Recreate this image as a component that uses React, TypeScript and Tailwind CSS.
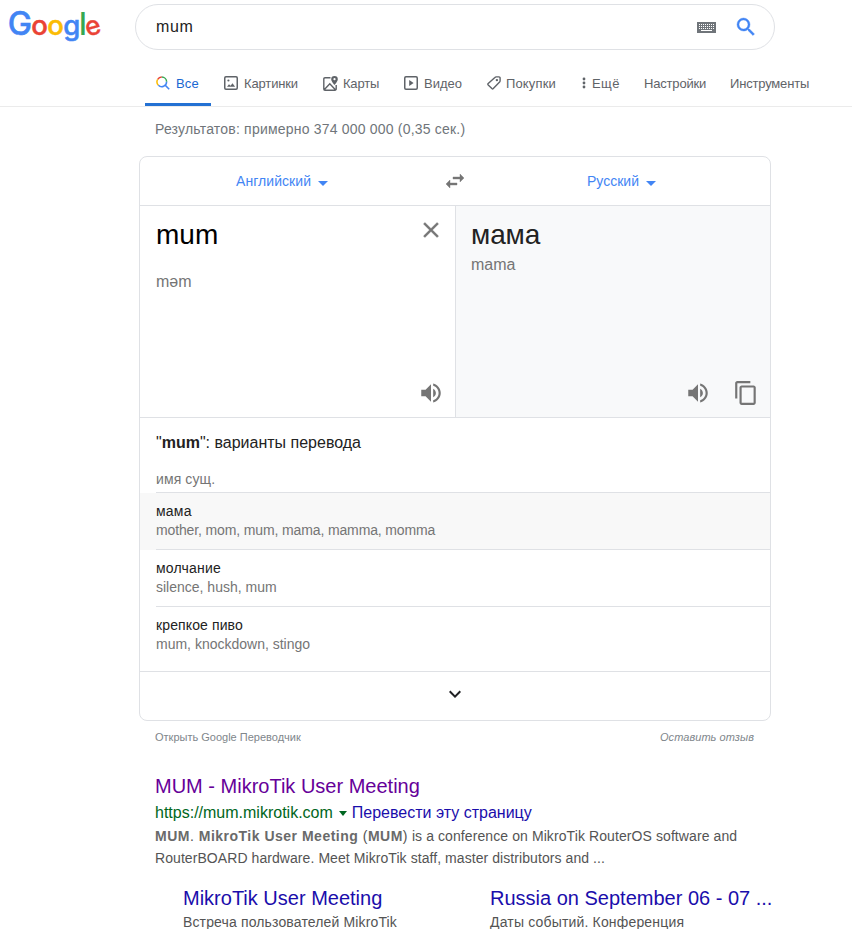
import type { ReactNode } from 'react';

interface IconProps {
  d: string;
  size: number;
  className?: string;
}

interface TabProps {
  label: string;
  icon?: ReactNode;
  className: string;
  labelClass?: string;
}

interface Variant {
  word: string;
  wordClass: string;
  back: string;
  backClass: string;
}

const SWAP = 'M6.99 11L3 15l3.99 4v-3H14v-2H6.99v-3zM21 9l-3.99-4v3H10v2h7.01v3L21 9z';
const CLOSE = 'M19 6.41L17.59 5 12 10.59 6.41 5 5 6.41 10.59 12 5 17.59 6.41 19 12 13.41 17.59 19 19 17.59 13.41 12z';
const SPEAKER = 'M3 9v6h4l5 5V4L7 9H3zm13.5 3c0-1.77-1.02-3.29-2.5-4.03v8.05c1.48-.73 2.5-2.25 2.5-4.02zM14 3.23v2.06c2.89.86 5 3.54 5 6.71s-2.11 5.85-5 6.71v2.06c4.01-.91 7-4.49 7-8.77s-2.99-7.86-7-8.77z';
const COPY = 'M16 1H4c-1.1 0-2 .9-2 2v14h2V3h12V1zm3 4H8c-1.1 0-2 .9-2 2v14c0 1.1.9 2 2 2h11c1.1 0 2-.9 2-2V7c0-1.1-.9-2-2-2zm0 16H8V7h11v14z';
const SEARCH = 'M15.5 14h-.79l-.28-.27A6.47 6.47 0 0 0 16 9.5 6.5 6.5 0 1 0 9.5 16c1.61 0 3.09-.59 4.23-1.57l.27.28v.79l5 4.99L20.49 19l-4.99-5zm-6 0C7.01 14 5 11.99 5 9.5S7.01 5 9.5 5 14 7.01 14 9.5 11.99 14 9.5 14z';
const EXPAND = 'M16.59 8.59L12 13.17 7.41 8.59 6 10l6 6 6-6z';

const variants: Variant[] = [
  { word: 'мама', wordClass: 'tracking-[0.2px]', back: 'mother, mom, mum, mama, mamma, momma', backClass: 'tracking-[-0.13px]' },
  { word: 'молчание', wordClass: 'tracking-[0.2px]', back: 'silence, hush, mum', backClass: '' },
  { word: 'крепкое пиво', wordClass: 'tracking-[0.12px]', back: 'mum, knockdown, stingo', backClass: '' },
];

function Icon({ d, size, className }: IconProps) {
  return (
    <svg width={size} height={size} viewBox="0 0 24 24" fill="currentColor" className={className}>
      <path d={d} />
    </svg>
  );
}

function Caret({ className, width = 10 }: { className: string; width?: number }) {
  return (
    <svg width={width} height="5" viewBox="0 0 10 5" preserveAspectRatio="none" fill="currentColor" className={`shrink-0 ${className}`}>
      <path d="M0 0h10L5 5z" />
    </svg>
  );
}

function Logo() {
  return (
    <svg width="135" height="46" viewBox="0 0 135 46" className="shrink-0 font-[Inter] font-medium">
      <g strokeWidth="0.5">
        <text x="7.7" y="31" fontSize="32.5" fill="#4285f4" stroke="#4285f4">G</text>
        <text x="31.3" y="31" fontSize="27.5" fill="#ea4335" stroke="#ea4335">o</text>
        <text x="47.3" y="31" fontSize="27.5" fill="#fbbc05" stroke="#fbbc05">o</text>
        <text x="63.3" y="31" fontSize="27.5" fill="#4285f4" stroke="#4285f4">g</text>
      </g>
      <text x="79" y="31" fontSize="31" fill="#34a853">l</text>
      <text x="85.2" y="31" fontSize="26.5" fill="#ea4335" stroke="#ea4335" strokeWidth="0.3" transform="rotate(-16 93 23.5)">e</text>
    </svg>
  );
}

function KeyboardIcon() {
  return (
    <svg width="19" height="11" viewBox="0 0 19 11">
      <rect width="19" height="11" fill="#70757a" />
      <g stroke="#fff" strokeWidth="1" strokeDasharray="1 1">
        <path d="M2 2.5h15M2 4.5h15M2 6.5h15" />
      </g>
      <path d="M4 8.5h11" stroke="#fff" />
    </svg>
  );
}

function AllIcon() {
  return (
    <svg width="14" height="14" viewBox="0 0 14 14" fill="none" strokeWidth="1.5">
      <path d="M1.7 3.4A4.8 4.8 0 0 1 5.8 1" stroke="#ea4335" />
      <path d="M5.8 1A4.8 4.8 0 0 1 10.6 5.8" stroke="#34a853" />
      <path d="M2.4 9.2A4.8 4.8 0 0 1 1.7 3.4" stroke="#fbbc05" />
      <path d="M10.6 5.8A4.8 4.8 0 0 1 2.4 9.2M9.1 9.1l4.1 4.1" stroke="#4285f4" />
    </svg>
  );
}

function PictureIcon() {
  return (
    <svg width="14" height="14" viewBox="0 0 14 14" fill="none">
      <rect x=".75" y=".75" width="12.5" height="12.5" rx="1.2" stroke="#5f6368" strokeWidth="1.5" />
      <path d="M3 10.8l2-2.5 1.5 1.5 2-2.6 2.6 3.6z" fill="#5f6368" />
      <circle cx="4.4" cy="4.5" r="1.1" fill="#5f6368" />
    </svg>
  );
}

function MapIcon() {
  return (
    <svg width="15" height="15" viewBox="0 0 15 15" fill="none">
      <path d="M7.5 1.75H2a1.2 1.2 0 0 0-1.2 1.2V13A1.2 1.2 0 0 0 2 14.2h10a1.2 1.2 0 0 0 1.2-1.2V9M1.2 13.8l5.6-6 5.6 6" stroke="#5f6368" strokeWidth="1.4" />
      <path d="M11.5 0a3.3 3.3 0 0 0-3.3 3.3c0 2.3 3.3 5.7 3.3 5.7s3.3-3.4 3.3-5.7A3.3 3.3 0 0 0 11.5 0zm0 4.3a1.1 1.1 0 1 1 0-2.2 1.1 1.1 0 0 1 0 2.2z" fill="#5f6368" />
    </svg>
  );
}

function VideoIcon() {
  return (
    <svg width="14" height="14" viewBox="0 0 14 14" fill="none">
      <rect x=".75" y=".75" width="12.5" height="12.5" rx="1.2" stroke="#5f6368" strokeWidth="1.5" />
      <path d="M5.2 4v6l4.4-3z" fill="#5f6368" />
    </svg>
  );
}

function TagIcon() {
  return (
    <svg width="14" height="14" viewBox="0 0 14 14" fill="none">
      <path d="M7.9 1.4C8.3 1 8.7.9 9.2.9H12a1.1 1.1 0 0 1 1.1 1.1v2.8c0 .5-.1.9-.5 1.3l-6.3 6.5a1 1 0 0 1-1.4 0L1.2 9a1 1 0 0 1 0-1.4z" stroke="#5f6368" strokeWidth="1.4" />
      <circle cx="9.9" cy="4.1" r="1.2" fill="#5f6368" />
    </svg>
  );
}

function DotsIcon() {
  return (
    <svg width="4" height="12" viewBox="0 0 4 12" fill="#5f6368">
      <circle cx="2" cy="2" r="1.4" />
      <circle cx="2" cy="6" r="1.4" />
      <circle cx="2" cy="10" r="1.4" />
    </svg>
  );
}

function Tab({ label, icon, className, labelClass }: TabProps) {
  return (
    <a className={`flex shrink-0 items-center whitespace-nowrap ${className}`}>
      {icon}
      <span className={`pt-0.5 ${labelClass ?? ''}`}>{label}</span>
    </a>
  );
}

export default function App() {
  return (
    <div className="h-[929px] w-[852px] overflow-hidden bg-white font-['Liberation_Sans',Arial,sans-serif] text-sm text-[#222]">
      <header className="h-[107px] border-b border-[#ebebeb]">
        <div className="flex pt-1">
          <Logo />
          <div className="flex h-[46px] w-[640px] items-center rounded-full border border-[#dfe1e5] pl-5 pr-4">
            <span className="flex-1 text-base tracking-[0.6px]">mum</span>
            <KeyboardIcon />
            <Icon d={SEARCH} size={24} className="ml-[18px] stroke-[#4285f4] stroke-[0.4] text-[#4285f4]" />
          </div>
        </div>
        <nav className="ml-[145px] mt-[11px] flex h-[45px] items-start text-[13px] text-[#5f6368]">
          <Tab label="Все" icon={<AllIcon />} className="mr-[13px] h-[45px] w-[66px] gap-1.5 border-b-[3px] border-[#2471d3] pl-[11px] pt-0.5 text-[#1967d2]" labelClass="tracking-[0.2px]" />
          <Tab label="Картинки" icon={<PictureIcon />} className="h-11 w-[99px] gap-1.5" labelClass="tracking-[-0.14px]" />
          <Tab label="Карты" icon={<MapIcon />} className="h-11 w-[81px] gap-[5px]" labelClass="tracking-[-0.2px]" />
          <Tab label="Видео" icon={<VideoIcon />} className="h-11 w-[83px] gap-1.5" />
          <Tab label="Покупки" icon={<TagIcon />} className="h-11 w-[95px] gap-[5px]" labelClass="tracking-[0.15px]" />
          <Tab label="Ещё" icon={<DotsIcon />} className="h-11 w-[62px] gap-1.5" labelClass="tracking-[0.4px]" />
          <Tab label="Настройки" className="h-11 w-[86px]" labelClass="tracking-[-0.18px]" />
          <Tab label="Инструменты" className="h-11 w-[100px]" labelClass="tracking-[-0.18px]" />
        </nav>
      </header>

      <p className="ml-[155px] pt-3 leading-5 tracking-[0.2px] text-[#70757a]">Результатов: примерно 374 000 000 (0,35 сек.)</p>

      <section className="ml-[139px] mt-[17px] h-[565px] w-[632px] overflow-hidden rounded-lg border border-[#dfe1e5]">
        <div className="flex h-[49px] items-center border-b border-[#dfe1e5] text-[#4285f4]">
          <div className="flex w-[303px] items-center pl-24 tracking-[0.06px]">
            Английский <Caret className="ml-[7px] mt-1" />
          </div>
          <Icon d={SWAP} size={24} className="stroke-[#757575] stroke-[0.4] text-[#757575]" />
          <div className="flex items-center pl-[120px]">
            Русский <Caret className="ml-[7px] mt-1" />
          </div>
        </div>

        <div className="flex h-[212px] border-b border-[#dfe1e5]">
          <div className="flex w-[316px] flex-col border-r border-[#dfe1e5] pl-4 pr-[11px]">
            <div className="flex h-[58px] justify-between">
              <span className="pt-3 text-[28px] leading-[34px] text-black">mum</span>
              <Icon d={CLOSE} size={26} className="mt-[11px] stroke-[#757575] stroke-[0.3] text-[#757575]" />
            </div>
            <span className="mt-2 text-base leading-5 text-[#757575]">məm</span>
            <Icon d={SPEAKER} size={26} className="mb-[11px] mt-auto self-end text-[#757575]" />
          </div>
          <div className="flex flex-1 flex-col bg-[#f8f9fa] pl-[15px] pr-[11px]">
            <span className="pt-3 text-[28px] leading-[34px] tracking-[-0.1px]">мама</span>
            <span className="mt-[3px] text-base leading-5 text-[#757575]">mama</span>
            <div className="mb-[11px] mt-auto flex justify-end gap-[22px] text-[#757575]">
              <Icon d={SPEAKER} size={26} />
              <Icon d={COPY} size={26} />
            </div>
          </div>
        </div>

        <div className="h-[254px] border-b border-[#dfe1e5]">
          <h3 className="pl-4 pt-[15px] text-base leading-5">
            "<b>mum</b>": варианты перевода
          </h3>
          <div className="ml-4 mt-4 h-6 border-b border-[#dfe1e5] leading-5 tracking-[0.1px] text-[#757575]">имя сущ.</div>
          {variants.map((v, i) => (
            <div key={v.word} className={i === 0 ? 'bg-[#f8f8f8] pl-4' : 'pl-4'}>
              <div className={`h-[57px] pt-[9px] leading-[19px] ${i < variants.length - 1 ? 'border-b border-[#dfe1e5]' : ''}`}>
                <div className={v.wordClass}>{v.word}</div>
                <div className={`text-[#757575] ${v.backClass}`}>{v.back}</div>
              </div>
            </div>
          ))}
        </div>

        <div className="flex h-12 justify-center pt-2.5">
          <Icon d={EXPAND} size={24} className="text-[#202124]" />
        </div>
      </section>

      <div className="ml-[155px] mt-2 flex w-[600px] justify-between text-[11px] leading-4 text-[#80868b]">
        <span>Открыть Google Переводчик</span>
        <i className="mr-px tracking-[0.06px]">Оставить отзыв</i>
      </div>

      <article className="ml-[155px] mt-[28px]">
        <h2 className="text-xl leading-[26px] text-[#609]">MUM - MikroTik User Meeting</h2>
        <div className="mt-0.5 flex items-center text-base leading-6 text-[#1a0dab]">
          <span className="text-[#006621]">https://mum.mikrotik.com</span>
          <Caret width={8} className="ml-1.5 mr-[5px] text-[#006621]" />
          <span>Перевести эту страницу</span>
        </div>
        <p className="whitespace-nowrap leading-[22px] text-[#545454]">
          <span className="tracking-[0.5px]">
            <b className="text-[#6a6a6a]">MUM</b>. <b className="text-[#6a6a6a]">MikroTik User Meeting</b> (<b className="text-[#6a6a6a]">MUM</b>)
          </span>{' '}
          <span className="tracking-[0.09px]">is a conference on MikroTik RouterOS software and</span>
          <br />
          <span className="tracking-[0.07px]">RouterBOARD hardware. Meet MikroTik staff, master distributors and ...</span>
        </p>
        <div className="mt-4 flex whitespace-nowrap pl-7 text-[#545454]">
          <div className="w-[307px]">
            <h3 className="text-xl leading-[26px] text-[#1a0dab]">MikroTik User Meeting</h3>
            <p className="leading-[22px] tracking-[0.14px]">Встреча пользователей MikroTik</p>
          </div>
          <div>
            <h3 className="text-xl leading-[26px] text-[#1a0dab]">Russia on September 06 - 07 ...</h3>
            <p className="leading-[22px] tracking-[0.17px]">Даты событий. Конференция</p>
          </div>
        </div>
      </article>
    </div>
  );
}
